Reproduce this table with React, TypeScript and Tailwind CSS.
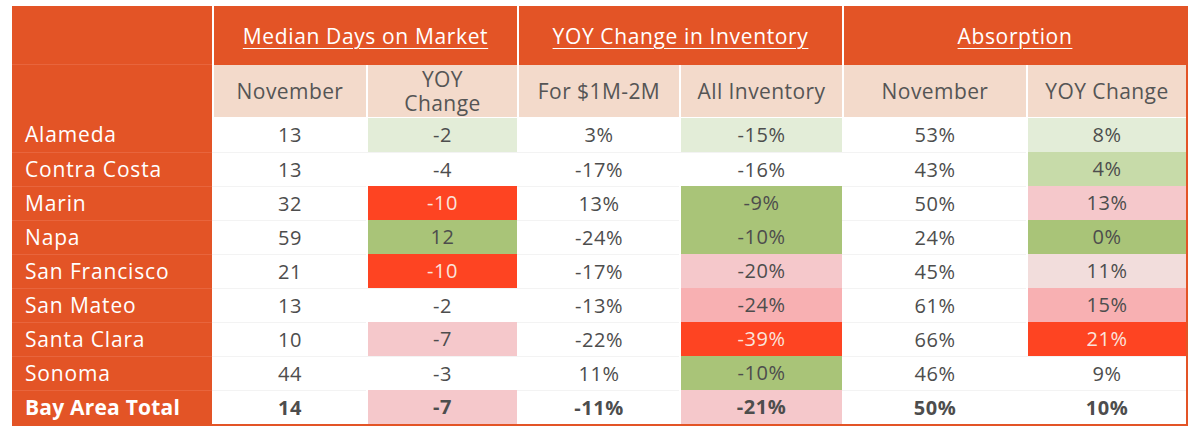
import React from 'react';

const ORANGE = 'bg-[#e35426]';

type Tone = 'none' | 'lg' | 'mg' | 'g' | 'red' | 'pk' | 'pk2' | 'vpk';

const TONE: Record<Tone, string> = {
  none: 'bg-white text-[#4d4d4d]',
  lg: 'bg-[#e3edd8] text-[#4d4d4d]',
  mg: 'bg-[#c7dba9] text-[#4d4d4d]',
  g: 'bg-[#a9c478] text-[#4d4d4d]',
  red: 'bg-[#fe4422] text-[#fbe3dc]',
  pk: 'bg-[#f5c8cb] text-[#4d4d4d]',
  pk2: 'bg-[#f8b0b2] text-[#4d4d4d]',
  vpk: 'bg-[#f2dddc] text-[#4d4d4d]',
};

type Cell = [string, Tone];

const ROWS: { name: string; cells: Cell[]; bold?: boolean }[] = [
  { name: 'Alameda', cells: [['13', 'none'], ['-2', 'lg'], ['3%', 'none'], ['-15%', 'lg'], ['53%', 'none'], ['8%', 'lg']] },
  { name: 'Contra Costa', cells: [['13', 'none'], ['-4', 'none'], ['-17%', 'none'], ['-16%', 'none'], ['43%', 'none'], ['4%', 'mg']] },
  { name: 'Marin', cells: [['32', 'none'], ['-10', 'red'], ['13%', 'none'], ['-9%', 'g'], ['50%', 'none'], ['13%', 'pk']] },
  { name: 'Napa', cells: [['59', 'none'], ['12', 'g'], ['-24%', 'none'], ['-10%', 'g'], ['24%', 'none'], ['0%', 'g']] },
  { name: 'San Francisco', cells: [['21', 'none'], ['-10', 'red'], ['-17%', 'none'], ['-20%', 'pk'], ['45%', 'none'], ['11%', 'vpk']] },
  { name: 'San Mateo', cells: [['13', 'none'], ['-2', 'none'], ['-13%', 'none'], ['-24%', 'pk2'], ['61%', 'none'], ['15%', 'pk2']] },
  { name: 'Santa Clara', cells: [['10', 'none'], ['-7', 'pk'], ['-22%', 'none'], ['-39%', 'red'], ['66%', 'none'], ['21%', 'red']] },
  { name: 'Sonoma', cells: [['44', 'none'], ['-3', 'none'], ['11%', 'none'], ['-10%', 'g'], ['46%', 'none'], ['9%', 'none']] },
  { name: 'Bay Area Total', bold: true, cells: [['14', 'none'], ['-7', 'pk'], ['-11%', 'none'], ['-21%', 'pk'], ['50%', 'none'], ['10%', 'none']] },
];

const GRID = 'grid grid-cols-[200px_154px_151px_162px_163px_184px_160px]';

export default function App() {
  return (
    <div className="w-[1200px] h-[439px] bg-white pt-[6px] pl-[12px] font-['Open_Sans',sans-serif]">
      <div className="w-[1176px] border-r-2 border-b-2 border-[#e35426]">
        {/* group headers */}
        <div className={`${GRID} h-[59px]`}>
          <div className={`${ORANGE} border-b border-[#e8653d]`} />
          {['Median Days on Market', 'YOY Change in Inventory', 'Absorption'].map((t) => (
            <div key={t} className="col-span-2 pl-[2px] bg-white">
              <div className={`${ORANGE} h-full flex items-center justify-center pt-[2px] text-white text-[21px] tracking-[0.03em] underline underline-offset-[4px] decoration-1`}>
                {t}
              </div>
            </div>
          ))}
        </div>

        {/* sub headers */}
        <div className={`${GRID} h-[53px]`}>
          <div className={ORANGE} />
          {['November', 'YOY\nChange', 'For $1M-2M', 'All Inventory', 'November', 'YOY Change'].map((t, i) => (
            <div key={i} className="pl-[2px] pb-[1px] bg-white">
              <div className="bg-[#f3dacb] h-full flex items-center justify-center text-center whitespace-pre-line leading-[24px] text-[21px] tracking-[0.02em] text-[#555]">
                {t}
              </div>
            </div>
          ))}
        </div>

        {/* data */}
        {ROWS.map((r, ri) => (
          <div key={r.name} className={`${GRID} h-[34px] ${r.bold ? 'font-bold' : ''}`}>
            <div className={`${ORANGE} ${ri > 0 ? 'border-t border-[#e8653d]' : ''} flex items-center pl-[13px] text-white text-[21px] ${r.bold ? 'tracking-[0.01em]' : 'tracking-[0.04em]'}`}>
              {r.name}
            </div>
            {r.cells.map(([v, tone], ci) => (
              <div key={ci} className={`pl-[2px] bg-white ${ri > 0 && tone === 'none' ? 'border-t border-[#f3f3f3]' : ''}`}>
                <div className={`${TONE[tone]} h-full flex items-center justify-center text-[20px] tracking-[0.03em]`}>{v}</div>
              </div>
            ))}
          </div>
        ))}
      </div>
    </div>
  );
}
